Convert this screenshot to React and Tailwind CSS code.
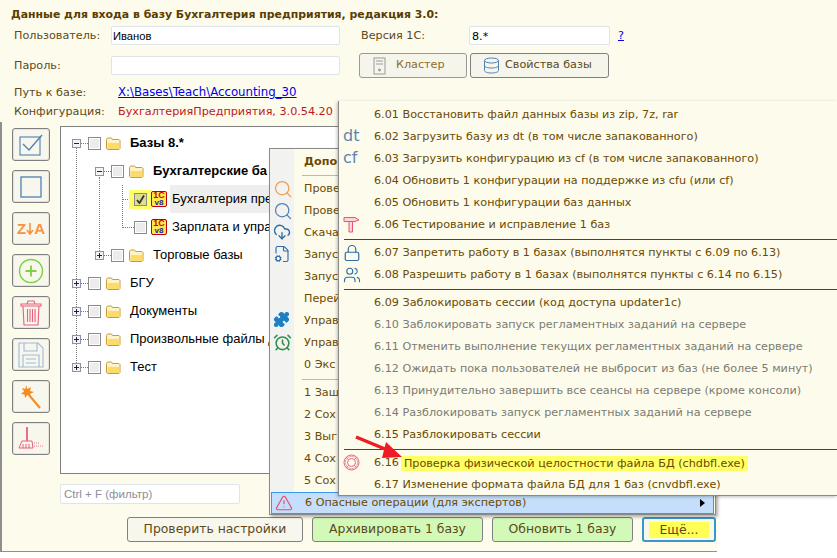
import { AlarmClock, CloudDownload, FileCog, Lock, Puzzle, Search, TriangleAlert, Users } from 'lucide-react'

const verdana = "font-['DejaVu_Sans',sans-serif]"

// подписи видны только до края вложенного меню
const mainRows = [
  ['Прове', 'search-orange'],
  ['Прове', 'search-blue'],
  ['Скача', 'cloud'],
  ['Запус', 'file'],
  ['Запус'],
  ['Перей'],
  ['Управ', 'puzzle'],
  ['Управ', 'clock'],
  ['0 Экс'],
]

const mainRows2 = ['1 Заш', '2 Сох', '3 Выг', '4 Сох', '5 Сох']

const subGroups = [
  [
    ['6.01 Восстановить файл данных базы из zip, 7z, rar'],
    ['6.02 Загрузить базу из dt (в том числе запакованного)', 'dt'],
    ['6.03 Загрузить конфигурацию из cf (в том числе запакованного)', 'cf'],
    ['6.04 Обновить 1 конфигурации на поддержке из cfu (или cf)'],
    ['6.05 Обновить 1 конфигурации баз данных'],
    ['6.06 Тестирование и исправление 1 баз', 'hammer'],
  ],
  [
    ['6.07 Запретить работу в 1 базах (выполнятся пункты с 6.09 по 6.13)', 'lock'],
    ['6.08 Разрешить работу в 1 базах (выполнятся пункты с 6.14 по 6.15)', 'users'],
  ],
  [
    ['6.09 Заблокировать сессии (код доступа updater1c)'],
    ['6.10 Заблокировать запуск регламентных заданий на сервере', null, true],
    ['6.11 Отменить выполнение текущих регламентных заданий на сервере', null, true],
    ['6.12 Ожидать пока пользователей не выбросит из баз (не более 5 минут)', null, true],
    ['6.13 Принудительно завершить все сеансы на сервере (кроме консоли)', null, true],
    ['6.14 Разблокировать запуск регламентных заданий на сервере', null, true],
    ['6.15 Разблокировать сессии'],
  ],
]

function MenuIcon({ name }) {
  if (name === 'search-orange') return <Search size={20} strokeWidth={1.5} className="text-[#f59a4a]" />
  if (name === 'search-blue') return <Search size={20} strokeWidth={1.5} className="text-[#4f81b5]" />
  if (name === 'cloud') return <CloudDownload size={18} strokeWidth={1.8} className="text-[#2f6da6]" />
  if (name === 'file') return <FileCog size={18} strokeWidth={1.5} className="text-[#2f6da6]" />
  if (name === 'puzzle') return <Puzzle size={17} strokeWidth={1.5} className="text-[#1f7fc4] fill-[#1f7fc4]" />
  if (name === 'clock') return <AlarmClock size={19} strokeWidth={2} className="text-[#2f8f4f]" />
  if (name === 'hammer') {
    return (
      <svg width="17" height="17" viewBox="0 0 17 17" fill="#fbd5da" stroke="#e8576f">
        <path d="M1 1.5 H12 L16 4 L12 5.5 H1 Z" />
        <path d="M6 5.5 H9.5 V16 H6 Z" />
      </svg>
    )
  }
  if (name === 'lock') return <Lock size={18} strokeWidth={1.6} className="text-[#2f6da6]" />
  if (name === 'users') return <Users size={18} strokeWidth={1.5} className="text-[#2f6da6]" />
  if (name === 'dt' || name === 'cf') {
    return <span className="font-['DejaVu_Sans',sans-serif] text-[16px] leading-none text-[#5b84b1]">{name}</span>
  }
  return null
}

function Folder() {
  return (
    <svg width="15" height="13" viewBox="0 0 15 13" className="shrink-0">
      <path d="M0.5 2.5 L1.5 1 H5.5 L6.5 2.5 H13 L14 3.5 V11.5 L13 12.5 H1.5 L0.5 11.5 Z" fill="#fdf3c4" stroke="#c99a3a" />
      <rect x="1.5" y="6" width="12" height="6" fill="#fbdc6b" />
    </svg>
  )
}

function Logo1C() {
  return (
    <span className="flex flex-col items-center justify-center w-[16px] h-[16px] shrink-0 bg-[#ffe94a] border border-[#c00000] rounded-[2px] font-['Liberation_Sans',sans-serif] font-bold leading-[7px]">
      <span className="text-[9px] text-[#d00000]">1C</span>
      <span className="text-[8px] text-[#1a1ab0]">v8</span>
    </span>
  )
}

function Check({ checked }) {
  return (
    <span className={`flex items-center justify-center w-[13px] h-[13px] shrink-0 border border-[#8a8a8a] ${checked ? 'bg-[#dede8c]' : 'bg-[#ececec] shadow-[inset_0_0_0_1px_#fff]'}`}>
      {checked && (
        <svg width="9" height="9" viewBox="0 0 9 9">
          <path d="M1 5 L3.5 8 L8 0.5" fill="none" stroke="#333" strokeWidth="1.8" />
        </svg>
      )}
    </span>
  )
}

function Expander({ open }) {
  return (
    <span className="relative flex items-center justify-center w-[9px] h-[9px] shrink-0 border border-[#8a94a8] bg-[#f4f4f8]">
      <span className="w-[5px] h-px bg-[#223]" />
      {!open && <span className="absolute w-px h-[5px] bg-[#223]" />}
    </span>
  )
}

function TreeRow({ level, open, hasExpander = true, bold, label, checked, isBase, selected }) {
  const pad = level === 0 ? 'pl-[11px]' : level === 1 ? 'pl-[34px]' : 'pl-[62px]'
  let labelClass = 'ml-[9px]'
  if (isBase) labelClass = 'ml-[5px]'
  if (selected) labelClass = 'ml-[3px] pl-[2px] bg-[#eeeeee] h-[28px] leading-[28px] w-[100px]'
  return (
    <div className={`flex items-center h-[28px] ${pad}`}>
      {hasExpander && <Expander open={open} />}
      {hasExpander && <span className="w-[7px] border-t border-dotted border-[#777] shrink-0" />}
      {!hasExpander && <span className="w-[11px] border-t border-dotted border-[#777] shrink-0" />}
      <span className={selected ? 'flex items-center justify-center w-[23px] h-[19px] -mx-[5px] bg-[#ffff66] shrink-0' : 'shrink-0'}>
        <Check checked={checked} />
      </span>
      <span className={isBase ? 'ml-[4px]' : 'ml-[5px]'}>{isBase ? <Logo1C /> : <Folder />}</span>
      <span className={`${labelClass} text-[13px] text-black font-['Liberation_Sans',sans-serif] whitespace-nowrap ${bold ? 'font-bold' : ''}`}>
        {label}
      </span>
    </div>
  )
}

const toolIcons = [
  <svg key="a" width="26" height="24" viewBox="0 0 26 24" fill="none"><rect x="2" y="4" width="20" height="18" stroke="#5b8ab5" strokeWidth="1.2" /><path d="M5 11 L11 17 L24 2" stroke="#4f81b5" strokeWidth="1.4" /></svg>,
  <svg key="b" width="24" height="24" viewBox="0 0 24 24" fill="none"><rect x="2" y="2" width="20" height="20" stroke="#5b8ab5" strokeWidth="1.4" /></svg>,
  <span key="c" className="flex items-center font-['Liberation_Sans',sans-serif] font-bold text-[15px] leading-none text-[#f7933e]">Z<svg width="8" height="12" viewBox="0 0 8 12"><path d="M4 0 V10 M1 7 L4 11 L7 7" fill="none" stroke="#f7933e" strokeWidth="1.6" /></svg>A</span>,
  <svg key="d" width="26" height="26" viewBox="0 0 26 26" fill="none"><circle cx="13" cy="13" r="11.5" stroke="#7ed03c" strokeWidth="1.4" /><path d="M13 7.5 V18.5 M7.5 13 H18.5" stroke="#7ed03c" strokeWidth="1.8" /></svg>,
  <svg key="e" width="22" height="26" viewBox="0 0 22 26" fill="none" stroke="#ea5f7a" strokeWidth="1.1"><path d="M1 6 H21 V4 H1 Z M7 4 L8 1 H14 L15 4 M3 6 L4 25 H18 L19 6" /><path d="M7.5 9 V22 M10 9 V22 M12.5 9 V22 M15 9 V22" /></svg>,
  <svg key="f" width="26" height="26" viewBox="0 0 26 26" fill="none" stroke="#9dbbd4" strokeWidth="1.1"><path d="M1 1 H20 L25 6 V25 H1 Z M6 1 V9 H19 V1 M5 25 V13 H21 V25 M8 17 H18 M8 21 H18" /></svg>,
  <svg key="g" width="22" height="26" viewBox="0 0 22 26"><path d="M6 1 L7.5 5 L11 3 L10 7 L14 8 L10 10 L11 13 L7.5 11 L5 14 L4.5 10.5 L1 10 L4 7.5 L2 4 L5.5 5 Z" fill="#f98a1c" /><path d="M9 11 L20 24" stroke="#f98a1c" strokeWidth="2" /></svg>,
  <svg key="h" width="26" height="26" viewBox="0 0 26 26" fill="none" stroke="#ea5f7a"><path d="M9 1 V15" strokeWidth="1.8" /><path d="M4 15 H14 L15 22 H1 Z M5 18 V22 M8 18 V22 M11 18 V22" strokeWidth="1" /><path d="M16 17 H21 M16 20 H25" strokeWidth="0.8" strokeDasharray="1 1" /></svg>,
]

function MainMenu() {
  return (
    <div className={`${verdana} absolute left-[269px] top-[148px] w-[447px] h-[367px] bg-[#fdfbec] border border-[#8a8a8a] shadow-[2px_2px_3px_rgba(0,0,0,0.3)] text-[11.2px] text-[#6b4a00]`}>
      <div className="absolute left-0 top-0 bottom-0 w-[24px] bg-[#f2f2f0]" />
      <div className="relative pl-[34px] h-[26px] flex items-center font-bold">Допо</div>
      <div className="relative ml-[32px] border-t border-[#bdb9a8]" />
      <div className="relative pt-[2px]">
        {mainRows.map(([label, icon], i) => (
          <div key={i} className="relative flex items-center h-[22px] pl-[34px] whitespace-nowrap">
            {icon && <span className="absolute left-[3px] top-[1px]"><MenuIcon name={icon} /></span>}
            {label}
          </div>
        ))}
      </div>
      <div className="relative ml-[32px] mt-[3px] border-t border-[#bdb9a8]" />
      <div className="relative pt-[2px]">
        {mainRows2.map((label) => (
          <div key={label} className="flex items-center h-[22px] pl-[34px] whitespace-nowrap">{label}</div>
        ))}
      </div>
      <div className="relative flex items-center justify-between h-[22px] mx-px pl-[33px] pr-[8px] bg-[#c4defb] border border-[#3a97ee]">
        <span className="absolute left-[3px] top-px"><TriangleAlert size={18} strokeWidth={1.6} className="text-[#e0506e]" /></span>
        <span>6 Опасные операции (для экспертов)</span>
        <span className="w-0 h-0 border-y-[4px] border-y-transparent border-l-[5px] border-l-black" />
      </div>
    </div>
  )
}

function SubRow({ label, icon, disabled }) {
  return (
    <div className={`relative flex items-center h-[22px] pl-[35px] whitespace-nowrap ${disabled ? 'text-[#7b7b73]' : ''}`}>
      {icon && <span className="absolute left-[4px] top-[2px]"><MenuIcon name={icon} /></span>}
      {label}
    </div>
  )
}

function SubMenu() {
  return (
    <div className={`${verdana} absolute left-[338px] top-[101px] w-[499px] h-[395px] bg-[#fdfbec] border-l border-b border-[#8a8a8a] shadow-[-1px_1px_3px_rgba(0,0,0,0.25)] text-[11.2px] text-[#6b4a00] pt-[3px]`}>
      {subGroups.map((group, i) => (
        <div key={i}>
          {group.map(([label, icon, disabled]) => (
            <SubRow key={label} label={label} icon={icon} disabled={disabled} />
          ))}
          <div className="ml-[5px] mt-[3px] mb-[2px] border-t border-[#5c4500]" />
        </div>
      ))}
      <div className="relative flex items-center h-[22px] pl-[35px] whitespace-nowrap">
        <span className="absolute left-[4px] top-[2px]">
          <svg width="17" height="17" viewBox="0 0 17 17" fill="none" stroke="#e8657c">
            <circle cx="8.5" cy="8.5" r="7.5" />
            <circle cx="8.5" cy="8.5" r="6.2" strokeWidth="0.6" />
            <circle cx="8.5" cy="8.5" r="4" />
            <path d="M3.2 3.2 L5.7 5.7 M13.8 3.2 L11.3 5.7 M3.2 13.8 L5.7 11.3 M13.8 13.8 L11.3 11.3" strokeWidth="0.8" />
          </svg>
        </span>
        6.16
        <span className="ml-[2px] pl-[3px] pr-[3px] bg-[#ffff66] h-[15px] leading-[15px]">Проверка физической целостности файла БД (chdbfl.exe)</span>
      </div>
      <SubRow label="6.17 Изменение формата файла БД для 1 баз (cnvdbfl.exe)" />
    </div>
  )
}

export default function App() {
  return (
    <div className={`${verdana} relative w-[837px] h-[558px] overflow-hidden bg-white text-[11.2px] text-[#5c4a1a]`}>
      {/* ---- верх ---- */}
      <div className="h-[122px] bg-[#fdfbec] pl-[11px] pt-[8px]">
        <div className="font-bold text-[#5a3d00] text-[10.9px] leading-[14px]">Данные для входа в базу Бухгалтерия предприятия, редакция 3.0:</div>
        <div className="flex items-center mt-[4px] pl-[3px] h-[19px]">
          <span className="w-[97px] pt-[2px]">Пользователь:</span>
          <div className="w-[229px] h-[19px] bg-white border border-[#dfe3ea] rounded-[2px] pl-px text-[11.2px] leading-[19px] text-black font-['Liberation_Sans',sans-serif]">Иванов</div>
          <span className="ml-[21px] w-[108px] pt-[2px]">Версия 1С:</span>
          <div className="w-[141px] h-[19px] bg-white border border-[#dfe3ea] rounded-[2px] pl-[2px] text-[11.2px] leading-[19px] text-black">8.*</div>
          <span className="ml-[8px] pt-[2px] text-[#0000ee] underline">?</span>
        </div>
        <div className="flex items-center mt-[8px] pl-[3px] h-[25px]">
          <span className="w-[97px] pt-[2px]">Пароль:</span>
          <div className="w-[229px] h-[19px] bg-white border border-[#dfe3ea] rounded-[2px]" />
          <button className="ml-[19px] w-[108px] h-[25px] flex items-center pl-[13px] gap-[10px] border border-[#999] rounded-[3px] bg-[#f6f5ec] text-[#8b6f2a]">
            <svg width="13" height="18" viewBox="0 0 13 18" fill="none" stroke="#9a9a9a"><rect x="1" y="1" width="11" height="16" /><path d="M3 4 H10 M3 7 H10" /><circle cx="6.5" cy="13" r="1" fill="#9a9a9a" /></svg>
            Кластер
          </button>
          <button className="ml-[3px] w-[139px] h-[25px] flex items-center pl-[12px] gap-[5px] border border-[#808080] rounded-[3px] bg-[#f6f5ec] text-[#5c4a1a]">
            <svg width="17" height="17" viewBox="0 0 17 17" fill="none" stroke="#4f81b5"><ellipse cx="8.5" cy="3.5" rx="7" ry="2.5" /><path d="M1.5 3.5 V13.5 C1.5 15 4.5 16 8.5 16 C12.5 16 15.5 15 15.5 13.5 V3.5 M1.5 8.5 C1.5 10 4.5 11 8.5 11 C12.5 11 15.5 10 15.5 8.5" /></svg>
            Свойства базы
          </button>
        </div>
        <div className="flex items-center mt-[7px] pl-[3px] h-[16px]">
          <span className="w-[104px]">Путь к базе:</span>
          <span className="text-[11.75px] text-[#0000ee] underline">X:\Bases\Teach\Accounting_30</span>
        </div>
        <div className="flex items-center mt-[3px] pl-[3px] h-[16px]">
          <span className="w-[104px]">Конфигурация:</span>
          <span className="text-[#c01818]">БухгалтерияПредприятия, 3.0.54.20</span>
        </div>
      </div>

      {/* ---- низ ---- */}
      <div className="w-[717px] h-[430px] bg-[#fdfbec] border-l-2 border-b border-[#8f8f8f] pl-[10px] pt-[4px]">
        <div className="flex">
          <div className="flex flex-col gap-[9px] pt-[2px]">
            {toolIcons.map((icon, i) => (
              <div key={i} className="flex items-center justify-center w-[38px] h-[33px] border border-[#808080] rounded-[3px] bg-[#f8f7ee] shadow-[inset_0_0_0_1px_#e6e4d8]">{icon}</div>
            ))}
          </div>
          <div className="relative ml-[10px] w-[640px] h-[348px] bg-white border border-[#808080] pt-[2px]">
            <span className="absolute left-[15px] top-[20px] h-[218px] border-l border-dotted border-[#777]" />
            <span className="absolute left-[38px] top-[50px] h-[80px] border-l border-dotted border-[#777]" />
            <span className="absolute left-[61px] top-[58px] h-[43px] border-l border-dotted border-[#777]" />
            <TreeRow level={0} open bold label="Базы 8.*" />
            <TreeRow level={1} open bold label="Бухгалтерские ба" />
            <TreeRow level={2} hasExpander={false} isBase selected checked label="Бухгалтерия пре" />
            <TreeRow level={2} hasExpander={false} isBase label="Зарплата и упра" />
            <TreeRow level={1} label="Торговые базы" />
            <TreeRow level={0} label="БГУ" />
            <TreeRow level={0} label="Документы" />
            <TreeRow level={0} label="Произвольные файлы д" />
            <TreeRow level={0} label="Тест" />
          </div>
        </div>
        <div className="ml-[48px] mt-[10px] w-[180px] h-[20px] bg-white border border-[#dfe3ea] rounded-[2px] pl-[3px] leading-[18px] text-[11.5px] text-[#8a8f99] font-['Liberation_Sans',sans-serif]">Ctrl + F (фильтр)</div>
        <div className="flex mt-[13px] ml-[115px] h-[25px] text-[12.4px]">
          <button className="w-[176px] border border-[#808080] rounded-[3px] bg-[#f8f7ee]">Проверить настройки</button>
          <button className="ml-[9px] w-[171px] border border-[#808080] rounded-[3px] bg-[#d2f9b8]">Архивировать 1 базу</button>
          <button className="ml-[9px] w-[141px] border border-[#808080] rounded-[3px] bg-[#d2f9b8]">Обновить 1 базу</button>
          <button className="ml-[9px] w-[74px] flex items-center justify-center border-2 border-[#3a97c8] rounded-[3px] bg-[#f8f7ee]">
            <span className="w-[60px] h-[16px] leading-[16px] bg-[#ffff55] text-center">Ещё...</span>
          </button>
        </div>
      </div>

      <MainMenu />
      <SubMenu />

      {/* стрелка поверх меню */}
      <svg width="50" height="26" viewBox="0 0 50 26" className="absolute left-[355px] top-[435px]">
        <path d="M1 2 L30 14" fill="none" stroke="#ee1c25" strokeWidth="3.5" />
        <path d="M31 7 L47 22 L27 23 Z" fill="#ee1c25" />
      </svg>
    </div>
  )
}
